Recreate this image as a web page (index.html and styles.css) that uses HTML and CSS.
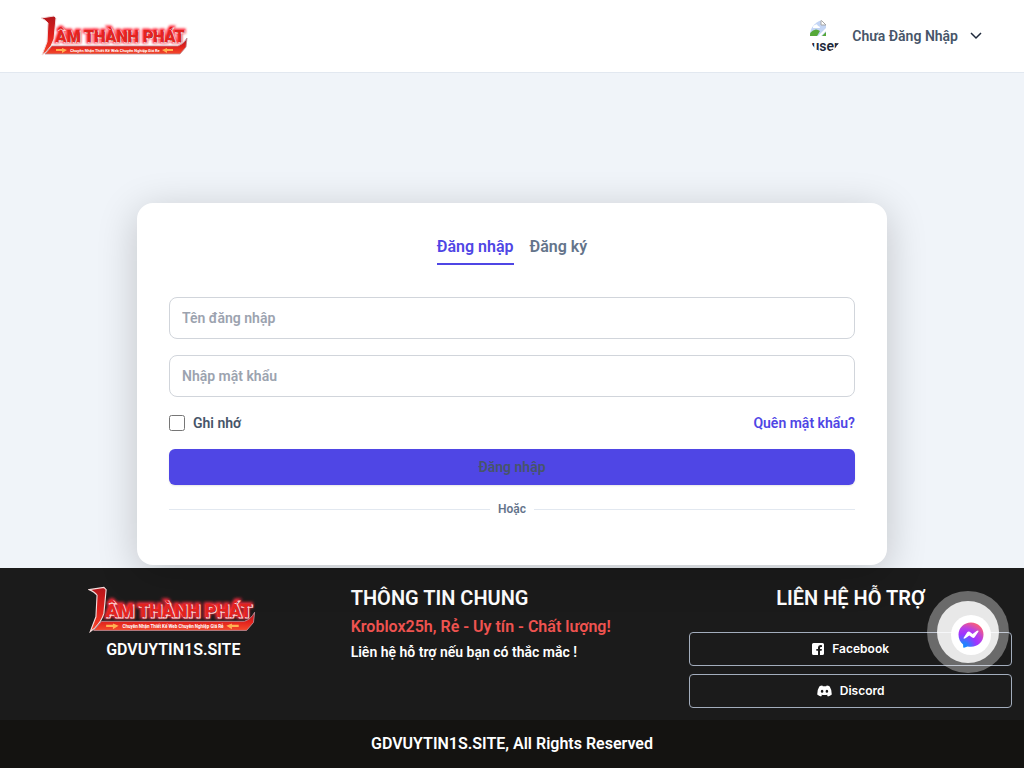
FILE: index.html
```
<!DOCTYPE html>
<html lang="vi">
<head>
    <meta charset="UTF-8">
    <meta name="viewport" content="width=device-width, initial-scale=1.0">
    <title>GDVUYTIN1S.SITE</title>
    <link rel="stylesheet" href="styles.css">
</head>
<body>
    <!-- Shared logo -->
    <svg class="sprite" aria-hidden="true">
        <defs>
            <linearGradient id="red" x1="0" y1="0" x2="0" y2="1">
                <stop offset="0" stop-color="#b3161b"/>
                <stop offset="0.5" stop-color="#e01f1c"/>
                <stop offset="1" stop-color="#f5482a"/>
            </linearGradient>
            <filter id="glow" x="-10%" y="-30%" width="120%" height="160%">
                <feGaussianBlur stdDeviation="1.2"/>
            </filter>
        </defs>
        <symbol id="logo" viewBox="0 0 150 42">
            <g class="logo-name" text-anchor="middle">
                <text class="logo-glow" x="80" y="27" filter="url(#glow)">ÂM THÀNH PHÁT</text>
                <text class="logo-edge" x="81" y="28">ÂM THÀNH PHÁT</text>
                <text class="logo-text" x="80" y="27">ÂM THÀNH PHÁT</text>
            </g>
            <path d="M1 3 L14 1 L16 3 L14 24 Q12 31 6 37 L2 40 L7 27 L8 8 Q6 5 1 3Z" fill="url(#red)" stroke="#f4dcdc" stroke-width="1"/>
            <path d="M12 31 L138 31 Q144 29 147 23 L146 32 L140 39 L5 39Z" fill="url(#red)" stroke="#b98a95" stroke-width="0.8"/>
            <path d="M16 34 H22 V33 L27 35 L22 38 V36 H16Z M133 34 H127 V33 L122 35 L127 38 V36 H133Z" fill="#ffb052"/>
            <text class="logo-tag" x="75" y="37" text-anchor="middle">Chuyên Nhận Thiết Kế Web Chuyên Nghiệp Giá Rẻ</text>
        </symbol>
    </svg>

    <header class="header">
        <a href="#" aria-label="Lâm Thành Phát"><svg class="logo"><use href="#logo"/></svg></a>
        <button type="button" class="user-menu">
            <span class="avatar">
                <svg width="16" height="16" viewBox="0 0 16 16" aria-hidden="true">
                    <path d="M0 0 H11 L16 5 V16 H0Z" fill="#c3d5f5"/>
                    <path d="M11 0 V5 H16Z" fill="#fff" stroke="#a6a6a6"/>
                    <path d="M3 7 Q3 5 5 5 Q7 3 8 6 Q10 6 10 8 H3Z" fill="#fff"/>
                    <path d="M0 16 V13 Q5 7 10 11 L7 16Z" fill="#55a838"/>
                    <path d="M8 16 L16 8 V11 L11 16Z" fill="#fff"/>
                    <path d="M12 16 L16 12 V16Z" fill="#55a838"/>
                </svg>
                <span class="avatar-alt">user</span>
            </span>
            <span>Chưa Đăng Nhập</span>
            <svg width="12" height="8" viewBox="0 0 12 8" aria-hidden="true"><path d="M1 1 L6 6 L11 1" fill="none" stroke="#1e293b" stroke-width="1.5"/></svg>
        </button>
    </header>

    <main class="main">
        <div class="card">
            <nav class="tabs">
                <a href="#" class="tab active">Đăng nhập</a>
                <a href="#" class="tab">Đăng ký</a>
            </nav>
            <form class="form">
                <input class="field" type="text" name="username" placeholder="Tên đăng nhập" aria-label="Tên đăng nhập">
                <input class="field" type="password" name="password" placeholder="Nhập mật khẩu" aria-label="Nhập mật khẩu">
                <div class="options">
                    <label class="remember" for="remember">
                        <input type="checkbox" id="remember" name="remember">
                        Ghi nhớ
                    </label>
                    <a href="#" class="forgot">Quên mật khẩu?</a>
                </div>
                <button type="submit" class="submit">Đăng nhập</button>
                <div class="divider">Hoặc</div>
            </form>
        </div>
    </main>

    <footer class="footer">
        <div class="footer-grid">
            <div class="brand">
                <svg class="footer-logo" role="img" aria-label="Lâm Thành Phát"><use href="#logo"/></svg>
                <p class="site-name">GDVUYTIN1S.SITE</p>
            </div>
            <div class="about">
                <h2>THÔNG TIN CHUNG</h2>
                <p class="slogan">Kroblox25h, Rẻ - Uy tín - Chất lượng!</p>
                <p class="help">Liên hệ hỗ trợ nếu bạn có thắc mắc !</p>
            </div>
            <div class="contact">
                <h2>LIÊN HỆ HỖ TRỢ</h2>
                <div class="links">
                    <a href="#" class="social">
                        <svg width="12" height="12" viewBox="0 0 12 12" aria-hidden="true"><path fill="#fff" fill-rule="evenodd" d="M1.5 0 H10.5 Q12 0 12 1.5 V10.5 Q12 12 10.5 12 H8 V7.8 H9.6 L9.9 6 H8 V4.9 Q8 4 9 4 H10 V2.3 Q9.2 2.1 8.4 2.1 Q6 2.1 6 4.6 V6 H4.3 V7.8 H6 V12 H1.5 Q0 12 0 10.5 V1.5 Q0 0 1.5 0Z"/></svg>
                        Facebook
                    </a>
                    <a href="#" class="social">
                        <svg width="15" height="12" viewBox="0 0 15 12" aria-hidden="true"><path fill="#fff" fill-rule="evenodd" d="M5.3 0.4 L5.8 1.3 Q7.5 1.1 9.2 1.3 L9.7 0.4 Q11.4 0.6 12.7 1.4 Q15 5 14.8 9.4 Q13 10.9 10.9 11.4 L10 10 L11 9.4 Q7.5 10.8 4 9.4 L5 10 L4.1 11.4 Q2 10.9 0.2 9.4 Q0 5 2.3 1.4 Q3.6 0.6 5.3 0.4Z M5.1 4.7 A1.3 1.5 0 1 0 5.1 7.7 A1.3 1.5 0 1 0 5.1 4.7Z M9.9 4.7 A1.3 1.5 0 1 0 9.9 7.7 A1.3 1.5 0 1 0 9.9 4.7Z"/></svg>
                        Discord
                    </a>
                </div>
            </div>
        </div>
        <div class="copyright">GDVUYTIN1S.SITE, All Rights Reserved</div>
    </footer>

    <a href="#" class="chat" aria-label="Messenger">
        <span class="chat-ring">
            <span class="chat-icon">
                <svg width="26" height="26" viewBox="0 0 26 26" aria-hidden="true">
                    <defs>
                        <radialGradient id="messenger" cx="0.2" cy="1" r="1.1">
                            <stop offset="0" stop-color="#0a8cff"/>
                            <stop offset="0.2" stop-color="#2f7bff"/>
                            <stop offset="0.5" stop-color="#a033ff"/>
                            <stop offset="0.7" stop-color="#b640e8"/>
                            <stop offset="1" stop-color="#ff6070"/>
                        </radialGradient>
                    </defs>
                    <path fill="url(#messenger)" d="M13 0.5 C20 0.5 25.5 5.6 25.5 12.6 C25.5 19.7 20 24.8 13 24.8 Q11.2 24.8 9.6 24.4 L6 25.8 Q5.3 26 5.2 25 L5.1 22.4 C2.2 20.2 0.5 16.8 0.5 12.6 C0.5 5.6 6 0.5 13 0.5Z"/>
                    <path fill="#fff" d="M5.5 16 L9.2 10.2 Q10.3 8.9 11.7 9.8 L14.6 12 L18.6 9 Q20.7 8 20.5 9.5 L16.8 15.1 Q15.7 16.6 14.2 15.6 L11.3 13.4 L7.4 16.3 Q5.5 17.4 5.5 16Z"/>
                </svg>
            </span>
        </span>
    </a>
</body>
</html>
```
FILE: styles.css
```
* {
    box-sizing: border-box;
}

body {
    margin: 0;
    min-height: 100vh;
    display: flex;
    flex-direction: column;
    background-color: #f0f4f9;
    color: #475569;
    font-family: Roboto, sans-serif;
    font-size: 14px;
    font-weight: 600;
    line-height: 20px;
}

h2, p {
    margin: 0;
}

a {
    color: inherit;
    text-decoration: none;
}

button, input {
    font: inherit;
    color: inherit;
}

svg {
    display: block;
}

.sprite {
    position: absolute;
    width: 0;
    height: 0;
}

/* logo */
.logo-name {
    font-size: 16px;
    font-weight: 800;
}

.logo-text {
    fill: #e3241f;
}

.logo-edge {
    fill: #7a1620;
    stroke: #ffd0d0;
    stroke-width: 1px;
}

.logo-glow {
    fill: #ff2b3d;
    stroke: #ff2b3d;
    stroke-width: 3px;
}

.logo-tag {
    fill: #fff;
    font-size: 4px;
    font-weight: 700;
}

.logo {
    width: 150px;
    height: 42px;
    overflow: visible;
}

/* header */
.header {
    display: flex;
    justify-content: space-between;
    align-items: center;
    height: 73px;
    padding: 0 40px;
    background-color: white;
    border-bottom: 1px solid #e2e8f0;
}

.user-menu {
    display: flex;
    align-items: center;
    gap: 12px;
    padding: 0 2px;
    border: none;
    background: none;
    cursor: pointer;
}

.avatar {
    width: 30px;
    height: 32px;
    overflow: hidden;
    border-radius: 16px;
    color: #1e293b;
    text-align: center;
}

.avatar-alt {
    display: block;
    line-height: 20px;
}

/* login card */
.main {
    flex: 1;
    display: flex;
    flex-direction: column;
    align-items: center;
    justify-content: flex-end;
    padding: 64px 16px 3px;
}

.card {
    position: relative;
    z-index: 1;
    width: 100%;
    max-width: 750px;
    padding: 32px;
    background-color: white;
    border-radius: 16px;
    box-shadow: 0 8px 40px rgba(0, 0, 0, 0.2);
}

.tabs {
    display: flex;
    justify-content: center;
    gap: 16px;
    margin-bottom: 32px;
    font-size: 16px;
    line-height: 24px;
}

.tab {
    padding-bottom: 4px;
    border-bottom: 2px solid transparent;
    color: #64748b;
}

.tab.active {
    color: #4f46e5;
    border-color: #4f46e5;
}

.form {
    display: flex;
    flex-direction: column;
    gap: 16px;
    padding-bottom: 16px;
}

.field {
    width: 100%;
    height: 42px;
    padding: 0 12px;
    border: 1px solid #d1d5db;
    border-radius: 8px;
    background-color: white;
}

.field::placeholder {
    color: #9ca3af;
    opacity: 1;
}

.options {
    display: flex;
    justify-content: space-between;
}

.remember {
    display: flex;
    align-items: center;
    gap: 8px;
}

.remember input {
    width: 16px;
    height: 16px;
    margin: 0;
}

.forgot {
    color: #4f46e5;
}

.submit {
    height: 36px;
    border: none;
    border-radius: 6px;
    background-color: #4f46e5;
    box-shadow: 0 1px 2px rgba(0, 0, 0, 0.1);
    cursor: pointer;
}

.divider {
    display: flex;
    align-items: center;
    gap: 8px;
    color: #64748b;
    font-size: 12px;
    line-height: 16px;
}

.divider::before,
.divider::after {
    content: "";
    flex: 1;
    height: 1px;
    background-color: #e2e8f0;
}

/* footer */
.footer {
    background-color: #1b1b1b;
    color: white;
}

.footer-grid {
    display: grid;
    grid-template-columns: repeat(3, 1fr);
    gap: 16px;
    padding: 16px 12px 12px;
}

.footer h2 {
    font-size: 20px;
    font-weight: 600;
    line-height: 28px;
}

.brand {
    display: flex;
    flex-direction: column;
    align-items: center;
    gap: 4px;
    padding-top: 2px;
}

.footer-logo {
    width: 170px;
    height: 48px;
}

.site-name, .slogan, .copyright {
    font-size: 16px;
    line-height: 24px;
}

.about {
    display: flex;
    flex-direction: column;
    gap: 3px;
}

.slogan {
    color: #ef5350;
}

.contact {
    text-align: center;
}

.links {
    display: flex;
    flex-direction: column;
    gap: 8px;
    margin-top: 20px;
}

.social {
    display: flex;
    justify-content: center;
    align-items: center;
    gap: 8px;
    height: 34px;
    border: 1px solid #a3adbd;
    border-radius: 4px;
    font-family: Inter, sans-serif;
    font-size: 12px;
}

.copyright {
    padding: 12px;
    background-color: #141311;
    text-align: center;
}

/* floating chat button */
.chat {
    position: fixed;
    right: 15px;
    bottom: 95px;
    z-index: 2;
    padding: 10px;
    border-radius: 50%;
    background-color: rgba(255, 255, 255, 0.35);
}

.chat-ring {
    display: block;
    padding: 14px 8px 8px 14px;
    border-radius: 50%;
    background-color: rgba(255, 255, 255, 0.85);
}

.chat-icon {
    display: block;
    padding: 7px;
    border-radius: 50%;
    background-color: white;
}
```
